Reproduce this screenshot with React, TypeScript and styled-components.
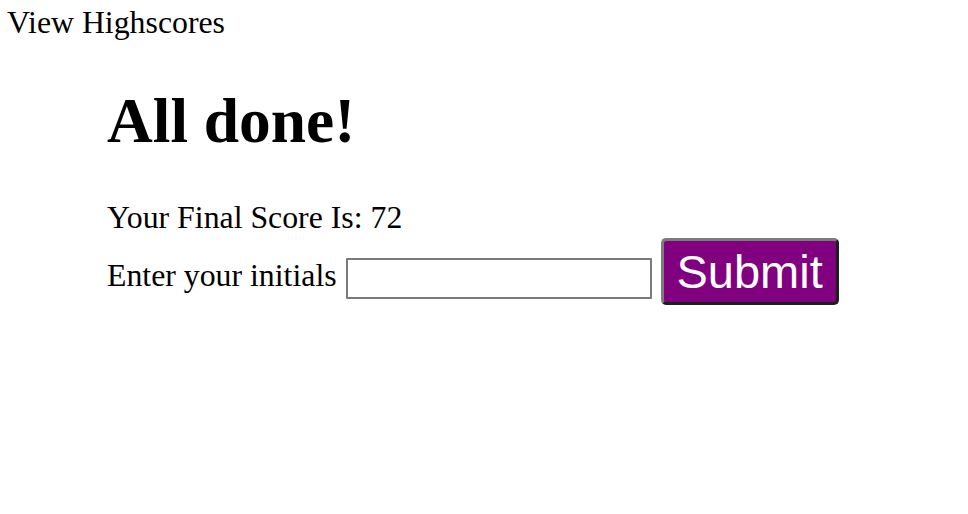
import React from "react";
import styled, { createGlobalStyle } from "styled-components";

const GlobalStyle = createGlobalStyle`
  html, body {
    margin: 0;
    padding: 0;
    background: #ffffff;
  }
  body {
    font-family: "Liberation Serif", "Times New Roman", serif;
    color: #000000;
  }
`;

const Page = styled.div`
  width: 968px;
  min-height: 514px;
`;

const Header = styled.header`
  padding: 5px 0 0 7px;
  font-size: 31.8px;
  line-height: 36px;
  height: 36px;
`;

const Main = styled.main`
  padding-left: 107px;
`;

const Title = styled.h1`
  margin: 43.5px 0 0 0;
  font-size: 63.4px;
  line-height: 72px;
  font-weight: bold;
`;

const Score = styled.p`
  margin: 43.5px 0 0 0;
  font-size: 31.8px;
  line-height: 36px;
`;

const Form = styled.form`
  display: flex;
  align-items: flex-start;
  margin-top: 1.6px;
`;

const Label = styled.label`
  margin-top: 20px;
  font-size: 31.8px;
  line-height: 36px;
`;

const Input = styled.input`
  box-sizing: border-box;
  margin: 20px 0 0 9px;
  width: 306px;
  height: 41px;
  border: 2px solid #7a7a7a;
  border-radius: 1px;
  background: #ffffff;
  padding: 0 6px;
  font-size: 28px;
`;

const Button = styled.button`
  box-sizing: border-box;
  margin-left: 9px;
  width: 178px;
  height: 67px;
  padding: 0;
  background: #800080;
  color: #ffffff;
  font-family: "Liberation Sans", Arial, sans-serif;
  font-size: 47px;
  line-height: 61px;
  border-style: solid;
  border-width: 3px;
  border-color: #7c7c7c #1e1e1e #1e1e1e #7c7c7c;
  border-radius: 5px;
  text-align: center;
`;

export default function App() {
  return (
    <Page>
      <GlobalStyle />
      <Header>View Highscores</Header>
      <Main>
        <Title>All done!</Title>
        <Score>Your Final Score Is: 72</Score>
        <Form onSubmit={(e) => e.preventDefault()}>
          <Label htmlFor="initials">Enter your initials</Label>
          <Input id="initials" type="text" />
          <Button type="submit">Submit</Button>
        </Form>
      </Main>
    </Page>
  );
}
